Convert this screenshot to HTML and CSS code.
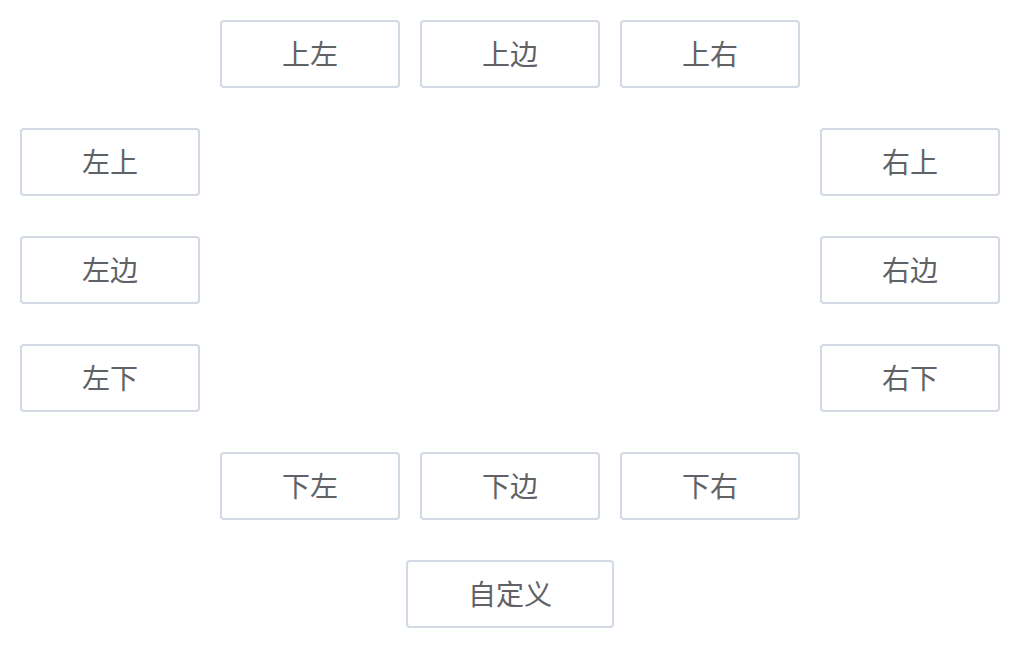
FILE: index.html
```html
<!DOCTYPE html>
<html lang="zh">
<head>
<meta charset="utf-8">
<link rel="stylesheet" href="styles.css">
</head>
<body>
<div class="page">
  <div class="row">
    <button class="btn">上左</button>
    <button class="btn">上边</button>
    <button class="btn">上右</button>
  </div>
  <div class="middle">
    <div class="col">
      <button class="btn">左上</button>
      <button class="btn">左边</button>
      <button class="btn">左下</button>
    </div>
    <div class="col">
      <button class="btn">右上</button>
      <button class="btn">右边</button>
      <button class="btn">右下</button>
    </div>
  </div>
  <div class="row">
    <button class="btn">下左</button>
    <button class="btn">下边</button>
    <button class="btn">下右</button>
  </div>
  <div class="row">
    <button class="btn btn-custom">自定义</button>
  </div>
</div>
</body>
</html>
```

FILE: styles.css
```css
html, body {
  margin: 0;
  padding: 0;
  background: #ffffff;
}
.page {
  width: 1020px;
  box-sizing: border-box;
  padding: 20px;
  display: flex;
  flex-direction: column;
  gap: 40px;
}
.row {
  display: flex;
  justify-content: center;
  gap: 20px;
}
.middle {
  display: flex;
  justify-content: space-between;
}
.col {
  display: flex;
  flex-direction: column;
  gap: 40px;
}
.btn {
  box-sizing: border-box;
  width: 180px;
  height: 68px;
  margin: 0;
  padding: 0 0 3px 0;
  border: 2px solid #d2dae6;
  border-radius: 4px;
  background: #ffffff;
  color: #606266;
  font-family: "Noto Sans CJK SC", "Noto Sans", sans-serif;
  font-size: 28px;
  line-height: 1;
  display: flex;
  align-items: center;
  justify-content: center;
}
.btn-custom {
  width: 208px;
}
```
